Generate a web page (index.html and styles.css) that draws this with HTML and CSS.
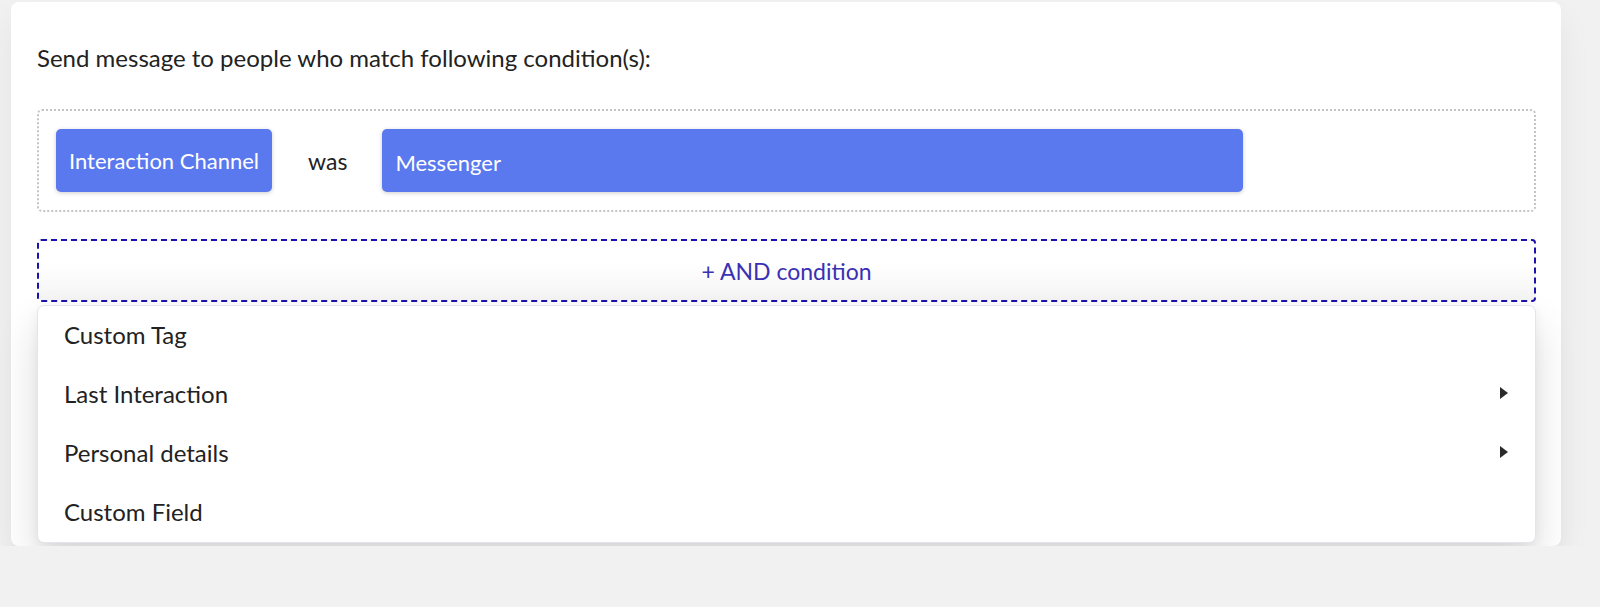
FILE: index.html
```html
<!DOCTYPE html>
<html lang="en">
<head>
    <meta charset="UTF-8">
    <meta name="viewport" content="width=device-width, initial-scale=1.0">
    <title>Broadcast - Audience conditions</title>
    <link rel="stylesheet" href="styles.css">
</head>
<body>
    <div class="panel">
        <p class="intro">Send message to people who match following condition(s):</p>

        <div class="rule-box">
            <div class="rule">
                <button class="chip">Interaction Channel</button>
                <span class="rule-op">was</span>
                <button class="chip chip-value">Messenger</button>
            </div>
        </div>

        <button class="and-btn">+ AND condition</button>

        <ul class="menu">
            <li class="menu-item">Custom Tag</li>
            <li class="menu-item has-sub">Last Interaction <span class="caret"></span></li>
            <li class="menu-item has-sub">Personal details <span class="caret"></span></li>
            <li class="menu-item">Custom Field</li>
        </ul>
    </div>
</body>
</html>
```

FILE: styles.css
```css
body {
    margin: 0;
    background: #f1f1f2;
    font-family: Lato, "Noto Sans", sans-serif;
    color: #222;
}
.panel {
    margin: 2px 39px 0 11px;
    padding: 42px 25px 3px 26px;
    background: #fff;
    border-radius: 8px;
    box-shadow: 0 16px 34px rgba(0, 0, 0, 0.06);
}
.intro {
    margin: 0;
    font-size: 24px;
    line-height: 28px;
}
.rule-box {
    margin-top: 37px;
    padding: 18px 17px;
    border: 2px dotted #c4c4c4;
    border-radius: 5px;
}
.rule {
    display: flex;
    align-items: center;
}
.chip {
    height: 63px;
    padding: 0 13px;
    background: #5a79ee;
    color: #fff;
    border: none;
    border-radius: 5px;
    font-family: inherit;
    font-size: 22px;
    box-shadow: 0 1px 4px rgba(0, 0, 0, 0.2);
    cursor: pointer;
}
.chip-value {
    width: 861px;
    text-align: left;
    padding-top: 4px;
}
.rule-op {
    margin: 0 35px 0 36px;
    font-size: 23px;
}
.and-btn {
    display: block;
    width: 100%;
    height: 63px;
    margin-top: 27px;
    border: 2px dashed #1d12aa;
    border-radius: 4px;
    background: linear-gradient(#fff 40%, #f4f4f5);
    color: #3a30b4;
    font-family: inherit;
    font-size: 23px;
    cursor: pointer;
}
.menu {
    list-style: none;
    margin: 3px 0 0;
    padding: 0;
    background: #fff;
    border: 1px solid #e3e5ea;
    border-radius: 7px;
    box-shadow: 0 20px 40px rgba(0, 0, 0, 0.14), 0 4px 12px rgba(0, 0, 0, 0.05);
    position: relative;
}
.menu-item {
    display: flex;
    align-items: center;
    justify-content: space-between;
    height: 56px;
    padding: 0 27px 3px 26px;
    font-size: 24px;
}
.caret {
    width: 0;
    height: 0;
    border-top: 6px solid transparent;
    border-bottom: 6px solid transparent;
    border-left: 8px solid #2a2a2a;
}
```
